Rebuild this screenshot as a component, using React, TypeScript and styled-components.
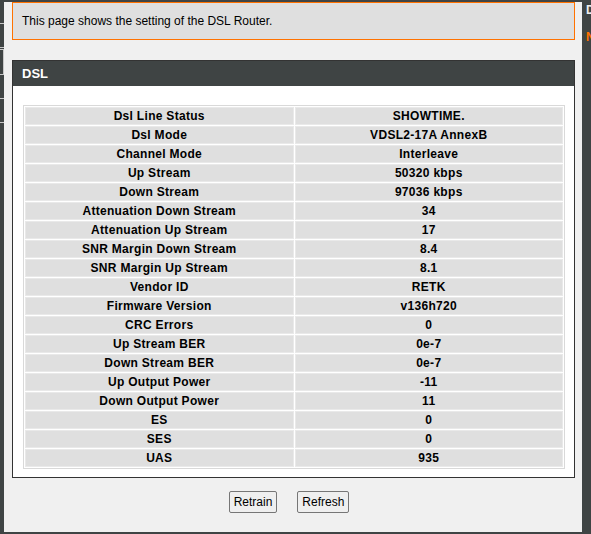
import React from 'react'
import styled, { createGlobalStyle } from 'styled-components'

const GlobalStyle = createGlobalStyle`
	html, body {
		margin: 0;
		padding: 0;
		background: #f0f0f0;
		font-family: "Liberation Sans", Arial, sans-serif;
		font-size: 12px;
		color: #000;
	}
`

const rows: [string, string][] = [
	['Dsl Line Status', 'SHOWTIME.'],
	['Dsl Mode', 'VDSL2-17A AnnexB'],
	['Channel Mode', 'Interleave'],
	['Up Stream', '50320 kbps'],
	['Down Stream', '97036 kbps'],
	['Attenuation Down Stream', '34'],
	['Attenuation Up Stream', '17'],
	['SNR Margin Down Stream', '8.4'],
	['SNR Margin Up Stream', '8.1'],
	['Vendor ID', 'RETK'],
	['Firmware Version', 'v136h720'],
	['CRC Errors', '0'],
	['Up Stream BER', '0e-7'],
	['Down Stream BER', '0e-7'],
	['Up Output Power', '-11'],
	['Down Output Power', '11'],
	['ES', '0'],
	['SES', '0'],
	['UAS', '935'],
]

export default function App() {
	return (
		<Page>
			<GlobalStyle />
			<TopBar />
			<Body>
				{/* left menu, mostly cut off */}
				<LeftNav>
					<NavItem />
					<NavItem />
					<NavItem active />
					<NavItem />
					<NavItem />
				</LeftNav>

				<Main>
					<InfoBox>This page shows the setting of the DSL Router.</InfoBox>

					<Panel>
						<PanelHeader>DSL</PanelHeader>
						<PanelBody>
							<StatusTable>
								<tbody>
									{rows.map(([label, value]) => (
										<tr key={label}>
											<Cell>{label}</Cell>
											<Cell>{value}</Cell>
										</tr>
									))}
								</tbody>
							</StatusTable>
						</PanelBody>
					</Panel>

					<Buttons>
						<Button>Retrain</Button>
						<Button>Refresh</Button>
					</Buttons>
				</Main>

				{/* right help column, cut off */}
				<RightBar>
					<HelpTitle>DSL</HelpTitle>
					<HelpLink>Note</HelpLink>
				</RightBar>
			</Body>
			<BottomBar />
		</Page>
	)
}

const Page = styled.div`
	width: 591px;
	height: 534px;
	display: flex;
	flex-direction: column;
	overflow: hidden;
`

const TopBar = styled.div`
	height: 2px;
	background: #3f4444;
`

const BottomBar = styled.div`
	height: 2px;
	background: #3f4444;
`

const Body = styled.div`
	flex: 1;
	display: flex;
	min-height: 0;
`

const LeftNav = styled.div`
	width: 4px;
	background: #3f4444;
	display: flex;
	flex-direction: column;
`

const NavItem = styled.div<{ active?: boolean }>`
	height: 24px;
	border-bottom: 1px solid #c8c8c8;
	box-sizing: border-box;
	${p => p.active && `
		height: 26px;
		border: 1px solid #c8c8c8;
		border-left: none;
		margin-top: 1px;
	`}
	&:first-child {
		height: 22px;
	}
`

const Main = styled.div`
	flex: 1;
	padding: 0 7px 0 8px;
	display: flex;
	flex-direction: column;
`

const InfoBox = styled.div`
	height: 38px;
	box-sizing: border-box;
	border: 1px solid #ff7200;
	background: #dfdfdf;
	padding-left: 9px;
	line-height: 36px;
	font-size: 12px;
`

const Panel = styled.div`
	margin-top: 20px;
	border: 1px solid #333;
	background: #fff;
`

const PanelHeader = styled.div`
	height: 25px;
	line-height: 26px;
	background: #3f4444;
	color: #fff;
	font-weight: bold;
	font-size: 13px;
	padding-left: 9px;
`

const PanelBody = styled.div`
	padding: 19px 9px 8px 10px;
`

const StatusTable = styled.table`
	width: 100%;
	border: 1px solid #d9d9d9;
	border-spacing: 1px;
`

const Cell = styled.td`
	width: 50%;
	height: 16px;
	padding: 0;
	line-height: 16px;
	border: 1px solid #e9e9e9;
	background: #dfdfdf;
	text-align: center;
	font-weight: bold;
	font-size: 12px;
	letter-spacing: 0.3px;
`

const Buttons = styled.div`
	display: flex;
	justify-content: center;
	gap: 20px;
	margin-top: 13px;
	padding-right: 9px;
`

const Button = styled.button`
	height: 22px;
	padding: 0 4px;
	font-family: "Liberation Sans", Arial, sans-serif;
	font-size: 12px;
	color: #000;
	background: #efefef;
	border: 1px solid #767676;
	border-radius: 2px;
`

const RightBar = styled.div`
	width: 9px;
	background: #3f4444;
	overflow: hidden;
	white-space: nowrap;
	padding-left: 4px;
	box-sizing: border-box;
`

const HelpTitle = styled.div`
	color: #eee;
	font-weight: bold;
	font-size: 12px;
	margin-top: 1px;
`

const HelpLink = styled.div`
	color: #ff7200;
	font-weight: bold;
	font-size: 12px;
	margin-top: 13px;
`
